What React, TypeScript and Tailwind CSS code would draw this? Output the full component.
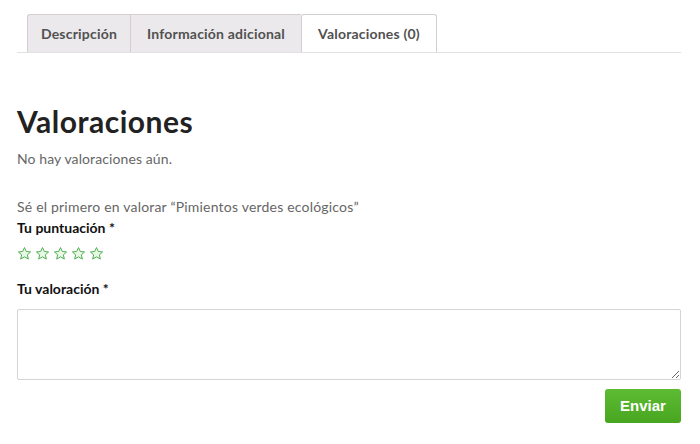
const Star = () => (
  <svg width="15" height="15" viewBox="0 0 24 24" className="shrink-0">
    <path
      d="M12 2.5l2.9 6.3 6.8.7-5.1 4.6 1.5 6.8L12 17.4l-6.1 3.5 1.5-6.8-5.1-4.6 6.8-.7z"
      fill="#eaf7e6"
      stroke="#4caf50"
      strokeWidth="1.6"
      strokeLinejoin="round"
    />
  </svg>
);

const tabs = [
  { label: "Descripción", w: "w-[103px]" },
  { label: "Información adicional", w: "w-[171px]" },
  { label: "Valoraciones (0)", w: "w-[136px]" },
];

export default function App() {
  const font = { fontFamily: "Lato, 'Noto Sans', sans-serif" };
  return (
    <div className="w-[700px] h-[444px] bg-white overflow-hidden" style={font}>
      <div className="pl-[17px] pr-[19px] pt-[14px]">
        {/* tabs */}
        <ul className="flex pl-[10px] border-b border-[#e4e1e3]">
          {tabs.map((t, i) => {
            const active = i === 2;
            return (
              <li
                key={t.label}
                className={
                  active
                    ? `${t.w} h-[38px] -mb-px flex items-center justify-center bg-white border border-b-0 border-[#d3ced2] rounded-t-[3px] text-[14px] font-bold text-[#515151] tracking-[0.2px]`
                    : `${t.w} h-[38px] flex items-center justify-center bg-[#ebe9eb] border-t border-l border-[#d3ced2] first:rounded-tl-[3px] text-[14px] font-bold text-[#515151] tracking-[0.2px]`
                }
              >
                {t.label}
              </li>
            );
          })}
        </ul>

        <h2 className="mt-[49px] text-[30px] leading-[38px] font-bold text-[#222] tracking-[0.5px]">
          Valoraciones
        </h2>
        <p className="mt-[9px] text-[14px] leading-[20px] text-[#666] tracking-[0.1px]">No hay valoraciones aún.</p>

        <p className="mt-[28px] text-[14px] leading-[20px] text-[#666] tracking-[0.2px]">
          Sé el primero en valorar “Pimientos verdes ecológicos”
        </p>
        <p className="mt-[1px] text-[14px] leading-[20px] font-bold text-[#111]">Tu puntuación *</p>
        <div className="mt-[8px] flex gap-[3px]">
          <Star />
          <Star />
          <Star />
          <Star />
          <Star />
        </div>

        <p className="mt-[18px] text-[14px] leading-[20px] font-bold text-[#111]">Tu valoración *</p>
        <textarea className="mt-[10px] block w-full h-[71px] border border-[#d4d4d4] rounded-[2px] outline-none" />

        <div className="mt-[9px] flex justify-end">
          <button
            className="w-[76px] h-[34px] rounded-[3px] bg-gradient-to-b from-[#5dbb33] to-[#47a51f] text-white text-[15px] font-bold"
            style={{ fontFamily: "'Liberation Sans', Arial, sans-serif" }}
          >
            Enviar
          </button>
        </div>
      </div>
    </div>
  );
}
